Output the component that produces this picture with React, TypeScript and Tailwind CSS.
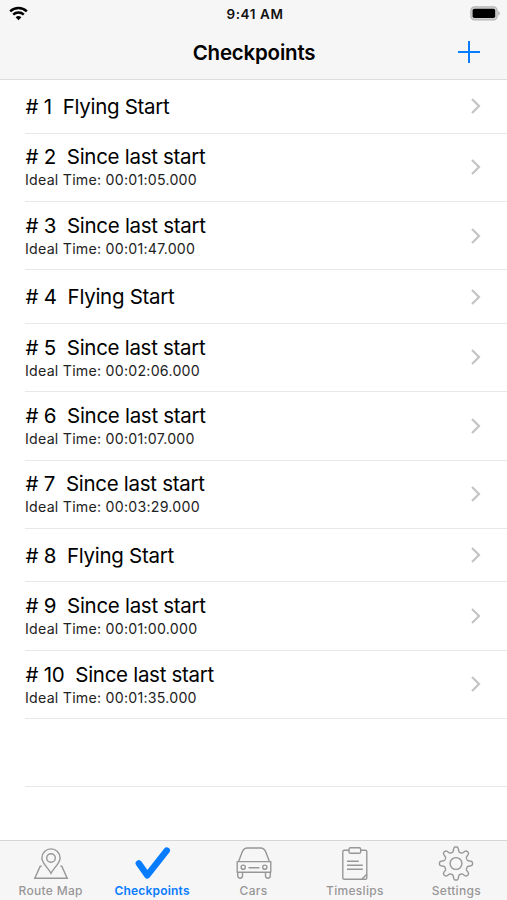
import type { ReactNode } from "react";

interface Checkpoint {
    id: number;
    title: string;
    idealTime?: string;
}

interface TabItemProps {
    label: string;
    active?: boolean;
    children: ReactNode;
}

const checkpoints: Checkpoint[] = [
    { id: 1, title: "Flying Start" },
    { id: 2, title: "Since last start", idealTime: "00:01:05.000" },
    { id: 3, title: "Since last start", idealTime: "00:01:47.000" },
    { id: 4, title: "Flying Start" },
    { id: 5, title: "Since last start", idealTime: "00:02:06.000" },
    { id: 6, title: "Since last start", idealTime: "00:01:07.000" },
    { id: 7, title: "Since last start", idealTime: "00:03:29.000" },
    { id: 8, title: "Flying Start" },
    { id: 9, title: "Since last start", idealTime: "00:01:00.000" },
    { id: 10, title: "Since last start", idealTime: "00:01:35.000" },
];

// eight rounded teeth around the centre of a 36x36 box
const gearPath = () => {
    const points: string[] = [];
    for (let i = 0; i < 240; i++) {
        const a = (i / 240) * Math.PI * 2;
        const r = 14.2 + 2.6 * Math.tanh(1.8 * Math.cos(8 * a) - 0.3);
        points.push(`${(18 + r * Math.cos(a)).toFixed(2)} ${(17.5 + r * Math.sin(a)).toFixed(2)}`);
    }
    return `M${points.join("L")}Z`;
};

const StatusBar = () => (
    <div className="flex h-[27px] items-center justify-between pl-[9px] pr-[7px]">
        <svg className="h-[15px] w-[19px]" viewBox="0 0 19 15" fill="none" stroke="#000" strokeWidth="2.5">
            <path d="M1.2 5.4a12 12 0 0 1 16.6 0" />
            <path d="M4.2 8.6a7.7 7.7 0 0 1 10.6 0" />
            <path d="M9.5 14.2 6.6 11.3a4.2 4.2 0 0 1 5.8 0z" fill="#000" stroke="none" />
        </svg>
        <span className="pl-[12px] pt-px text-[13.5px] font-semibold tracking-[0.6px] text-[#111]">9:41 AM</span>
        <svg className="h-[15px] w-[30px]" viewBox="0 0 30 15">
            <rect x="0.9" y="0.9" width="26.2" height="13" rx="3.6" fill="#d2d2d2" stroke="#b4b4b4" strokeWidth="1.2" />
            <rect x="2.6" y="2.8" width="22.6" height="9.2" rx="1.8" fill="#000" />
            <path d="M28.2 5.1q1.6.8 1.6 2.3t-1.6 2.3z" fill="#b4b4b4" />
        </svg>
    </div>
);

const CheckpointRow = (props: { checkpoint: Checkpoint }) => {
    const { id, title, idealTime } = props.checkpoint;

    return (
        <li className={`ml-[25px] flex items-center justify-between border-b border-[#e8e8ea] pr-[26px] ${idealTime ? "h-[68.4px]" : "h-[53.4px]"}`}>
            <div className={idealTime ? "pt-[0.4px]" : "pt-[1.4px]"}>
                <p className="whitespace-pre pl-[0.5px] text-[20.5px] leading-[26px] tracking-[-0.29px]">{`# ${id}  ${title}`}</p>
                {idealTime && (
                    <p className="whitespace-pre text-[14.2px] leading-[20px] tracking-[0.24px] text-[#222]">{`Ideal Time: ${idealTime}`}</p>
                )}
            </div>
            <svg className="h-[16px] w-[10px]" viewBox="0 0 10 16" fill="none" stroke="#c4c4c7" strokeWidth="2.2">
                <path d="m1 1 7 7-7 7" />
            </svg>
        </li>
    );
};

const TabItem = (props: TabItemProps) => (
    <div className={`flex flex-1 flex-col items-center pt-[5px] ${props.active ? "text-[#087cff]" : "text-[#979797]"}`}>
        <svg className="h-[36px] w-[36px]" viewBox="0 0 36 36" fill="none" stroke="currentColor" strokeWidth="1.4">
            {props.children}
        </svg>
        <span className={`whitespace-nowrap text-[12px] leading-[18px] ${props.active ? "font-semibold tracking-[0.2px]" : "font-medium tracking-[0.3px]"}`}>
            {props.label}
        </span>
    </div>
);

const App = () => {
    return (
        <div className="flex h-[900px] w-[507px] flex-col overflow-hidden bg-white font-['Inter',sans-serif] text-black">
            <header className="h-[80px] border-b border-[#dedee0] bg-[#f7f6f7]">
                <StatusBar />
                <div className="grid h-[50px] grid-cols-[1fr_auto_1fr] items-center">
                    <span />
                    <h1 className="pl-px pt-[2px] text-[20.5px] font-semibold tracking-[-0.2px]">Checkpoints</h1>
                    <svg className="mr-[27px] h-[22px] w-[22px] justify-self-end" viewBox="0 0 22 22" stroke="#087cff" strokeWidth="2">
                        <path d="M11 0v22M0 11h22" />
                    </svg>
                </div>
            </header>

            <ul className="flex-1 pt-[0.2px]">
                {checkpoints.map((checkpoint) => (
                    <CheckpointRow key={checkpoint.id} checkpoint={checkpoint} />
                ))}
                <li className="ml-[25px] h-[68.4px] border-b border-[#e8e8ea]" />
            </ul>

            <nav className="flex h-[60px] border-t border-[#d6d6d8] bg-[#f7f6f7]">
                <TabItem label="Route Map">
                    <path d="M18 27.3C15.5 22 8.9 17.6 8.9 12a9.1 9.1 0 0 1 18.2 0c0 5.6-6.6 10-9.1 15.3z" />
                    <circle cx="18" cy="12" r="4.3" />
                    <path d="M8.6 20.3H7.2L1.8 32.2h32.4L28.8 20.3h-1.4" />
                </TabItem>
                <TabItem label="Checkpoints" active>
                    <path d="M4.8 17.3 13.3 29.3 32.8 4.6" strokeWidth="6.4" strokeLinecap="round" strokeLinejoin="round" />
                </TabItem>
                <TabItem label="Cars">
                    <path d="M2.6 15.6 6 6.4Q7.6 2 11.5 2h13q3.9 0 5.5 4.4l3.4 9.2" />
                    <path d="M1.2 15.6h33.6v10.6H1.2z" strokeLinejoin="round" />
                    <path d="M1.7 26.2v3.6a2.4 2.4 0 0 0 4.8 0v-3.6M29.5 26.2v3.6a2.4 2.4 0 0 0 4.8 0v-3.6M12.5 21.7h11" />
                    <circle cx="7.2" cy="21.2" r="2.1" />
                    <circle cx="28.8" cy="21.2" r="2.1" />
                </TabItem>
                <TabItem label="Timeslips">
                    <path d="M12 4.2H7.3Q5.8 4.2 5.8 5.7v26q0 1.5 1.5 1.5h21q1.5 0 1.5-1.5v-26q0-1.5-1.5-1.5h-4.6" />
                    <rect x="12" y="1.7" width="11.7" height="5.6" rx="1.6" />
                    <path d="m25 33 4.8-4.8M10 15.2h11.8M10 19.2h15.8M10 23.2h15.8" />
                </TabItem>
                <TabItem label="Settings">
                    <path d={gearPath()} />
                    <circle cx="18" cy="17.5" r="5.9" />
                </TabItem>
            </nav>
        </div>
    );
};

export default App;
